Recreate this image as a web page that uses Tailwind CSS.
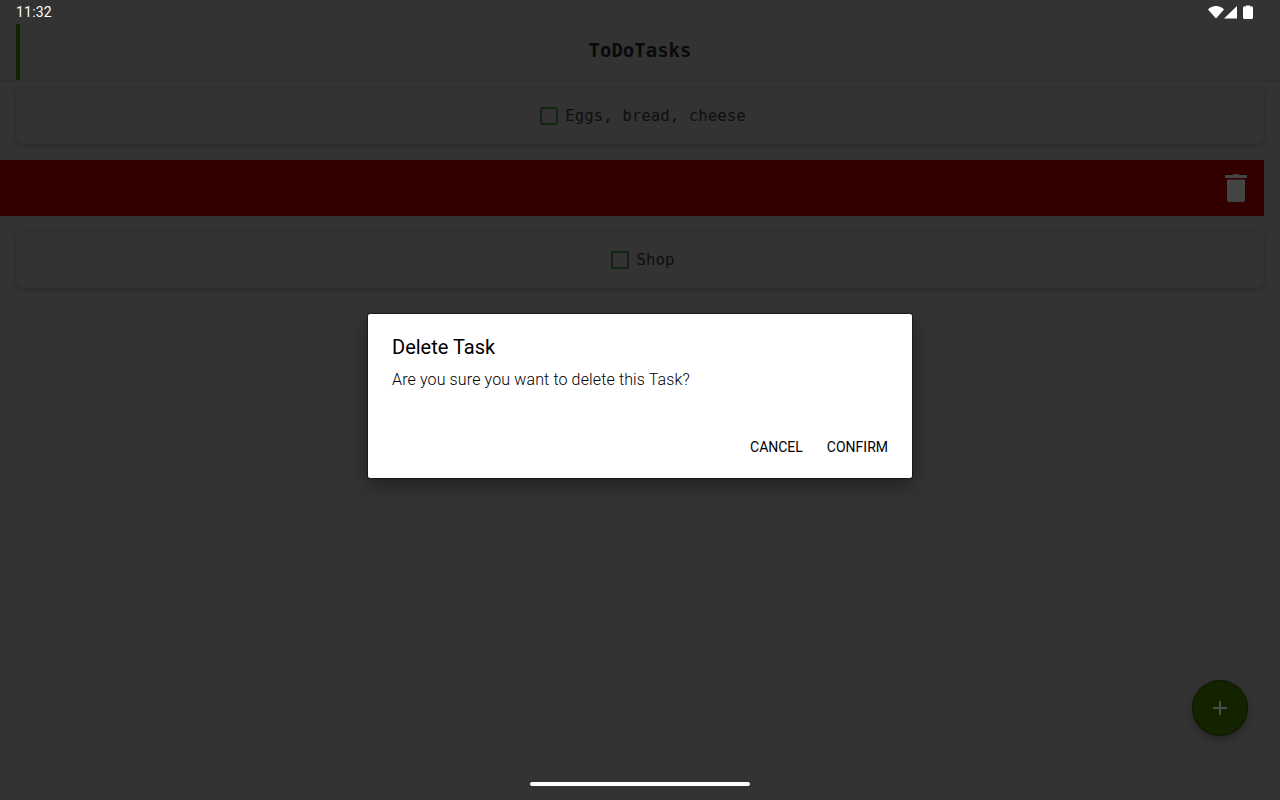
<!DOCTYPE html>
<html lang="en">
<head>
  <meta charset="UTF-8"/>
  <meta name="viewport" content="width=device-width, initial-scale=1.0"/>
  <title>ToDoTasks</title>
  <script src="https://cdn.jsdelivr.net/npm/@tailwindcss/browser@4"></script>
</head>
<body class="relative w-[1280px] h-[800px] overflow-hidden bg-[#333333] font-['Roboto',sans-serif]">
  <!-- status bar -->
  <div class="h-6 pl-4 pr-[27px] flex items-center justify-between">
    <span class="text-[14px] leading-[23px] tracking-[0.2px] text-white">11:32</span>
    <div class="flex items-center">
      <svg width="16" height="14" viewBox="0 0 16 14"><path d="M0 4.500C2 2.400 4.800 1 8 1s6 1.400 8 3.500L8 13.500Z" fill="#fff"/></svg>
      <svg width="13" height="14" viewBox="0 0 13 14"><path d="M13 1V13.500H0Z" fill="#fff"/></svg>
      <svg width="10" height="14" viewBox="0 0 10 14" class="ml-[6px]"><path d="M3 1.200V.500h4v.700h1.500A1.500 1.500 0 0 1 10 2.700V12.500A1.500 1.500 0 0 1 8.500 14h-7A1.500 1.500 0 0 1 0 12.500V2.700A1.500 1.500 0 0 1 1.500 1.200Z" fill="#fff"/></svg>
    </div>
  </div>

  <!-- toolbar -->
  <header class="relative h-14 flex items-center justify-center shadow-[0_1px_1px_rgba(0,0,0,0.1)]">
    <div class="absolute left-4 top-0 w-1 h-14 bg-[#132300]"></div>
    <h1 class="font-['DejaVu_Sans_Mono',monospace] font-bold text-[19px] leading-[54px] text-[#0a0a0a] pb-[4px]">ToDoTasks</h1>
  </header>

  <!-- task list -->
  <main class="flex flex-col gap-4 pt-2">
    <div class="h-14 mx-4 pl-[6px] rounded-lg bg-[#333333] shadow-[0_1px_4px_rgba(0,0,0,0.22)] flex items-center justify-center gap-[7px]">
      <span class="w-[18px] h-[18px] rounded-[2px] border-2 border-[#122412]"></span>
      <span class="font-['DejaVu_Sans_Mono',monospace] text-[15.8px] text-[#0f0f0f]">Eggs, bread, cheese</span>
    </div>
    <div class="h-14 mr-4 bg-[#330000] flex items-center justify-end pr-4">
      <svg width="24" height="30" viewBox="0 0 24 30"><path d="M8.500 2 9.500 1h5l1 1H23V5H1V2ZM3 6.500h18V26.500a2.500 2.500 0 0 1-2.500 2.500h-13A2.500 2.500 0 0 1 3 26.500Z" fill="#444444"/></svg>
    </div>
    <div class="h-14 mx-4 pl-[6px] rounded-lg bg-[#333333] shadow-[0_1px_4px_rgba(0,0,0,0.22)] flex items-center justify-center gap-[7px]">
      <span class="w-[18px] h-[18px] rounded-[2px] border-2 border-[#122412]"></span>
      <span class="font-['DejaVu_Sans_Mono',monospace] text-[15.8px] text-[#0f0f0f]">Shop</span>
    </div>
  </main>

  <!-- add button -->
  <button class="absolute left-[1192px] top-[680px] w-14 h-14 rounded-full bg-[#132300] flex items-center justify-center shadow-[inset_0_0_0_1px_rgba(0,0,0,0.35),0_4px_8px_rgba(0,0,0,0.3)]">
    <svg width="14" height="14" viewBox="0 0 14 14"><path d="M6 0h2v6h6v2H8v6H6V8H0V6h6Z" fill="#4c4c4c"/></svg>
  </button>

  <!-- nav handle -->
  <div class="absolute left-[530px] top-[782px] w-[220px] h-1 rounded-full bg-white"></div>

  <!-- dialog -->
  <div class="absolute left-[368px] top-[314px] w-[544px] h-[164px] rounded-[2px] bg-white shadow-[0_0_0_1px_rgba(0,0,0,0.4),0_8px_20px_rgba(0,0,0,0.35)] px-6 pt-[19px] flex flex-col">
    <h2 class="text-[20px] leading-[28px] font-normal text-black">Delete Task</h2>
    <p class="mt-[9px] text-[16px] leading-[20px] tracking-[0.13px] font-light text-black">Are you sure you want to delete this Task?</p>
    <div class="mt-auto pb-[21px] flex justify-end gap-6">
      <span class="text-[14px] leading-[20px] font-normal text-black">CANCEL</span>
      <span class="text-[14px] leading-[20px] font-normal text-black">CONFIRM</span>
    </div>
  </div>
</body>
</html>
